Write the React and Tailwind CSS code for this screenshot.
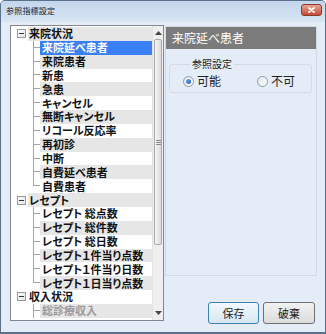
import React from "react";

const tree = [
    {
        label: "来院状況",
        children: ["来院延べ患者", "来院患者", "新患", "急患", "キャンセル", "無断キャンセル", "リコール反応率", "再初診", "中断", "自費延べ患者", "自費患者"],
    },
    {
        label: "レセプト",
        children: ["レセプト 総点数", "レセプト 総件数", "レセプト 総日数", "レセプト１件当り点数", "レセプト１件当り日数", "レセプト１日当り点数"],
    },
    {
        label: "収入状況",
        children: ["総診療収入"],
        dim: true,
        open: true,
    },
];

// flatten so the stripes follow the global row index
const rows = [];
tree.forEach((group) => {
    rows.push({ type: "root", label: group.label });
    group.children.forEach((c, i) => {
        rows.push({ type: "leaf", label: c, last: !group.open && i === group.children.length - 1, dim: group.dim });
    });
});

const SELECTED = 1;

const MinusBox = () => (
    <div className="w-[9px] h-[9px] shrink-0 border border-[#9a9a9a] bg-gradient-to-br from-white to-[#e4e4e4] flex items-center justify-center">
        <div className="w-[5px] h-px bg-[#333]" />
    </div>
);

const Row = ({ row, index }) => {
    const selected = index === SELECTED;
    const bg = selected ? "bg-[#3a7ff3] text-white" : index % 2 === 0 ? "bg-[#e6e6e6]" : "bg-white";
    const color = selected ? "" : row.dim ? "text-[#9a9a9a]" : "text-[#111]";

    if (row.type === "root") {
        return (
            <div className="flex items-center h-[13.85px]">
                <div className="w-[6px] shrink-0" />
                <MinusBox />
                <div className="w-[2px] shrink-0" />
                <div className={`flex-1 h-full flex items-center pl-[1px] whitespace-nowrap text-[#111] ${bg}`}>{row.label}</div>
            </div>
        );
    }

    return (
        <div className="flex h-[13.85px]">
            <div className="w-[22px] shrink-0" />
            <div className="w-[7px] shrink-0 flex flex-col">
                <div className="h-1/2 border-l border-b border-[#a5a5a5]" />
                <div className={`h-1/2 ${row.last ? "" : "border-l border-[#a5a5a5]"}`} />
            </div>
            <div className={`flex-1 h-full flex items-center pl-[2px] whitespace-nowrap ${bg} ${color}`}>{row.label}</div>
        </div>
    );
};

const Arrow = ({ down }) => (
    <svg width="7" height="4" viewBox="0 0 7 4">
        <path d={down ? "M0 0 L7 0 L3.5 4 Z" : "M0 4 L7 4 L3.5 0 Z"} fill="#444" />
    </svg>
);

const Scrollbar = () => (
    <div className="w-[11px] shrink-0 bg-[#efefef] border-l border-[#e2e2e2] flex flex-col">
        <div className="h-[13px] flex items-center justify-center">
            <Arrow />
        </div>
        <div className="h-[206px] mx-[1px] rounded-[2px] border border-[#a9a9a9] bg-gradient-to-r from-[#f6f6f6] to-[#dcdcdc] flex flex-col items-center justify-center gap-px">
            <div className="w-[5px] h-px bg-[#8a8a8a]" />
            <div className="w-[5px] h-px bg-[#8a8a8a]" />
            <div className="w-[5px] h-px bg-[#8a8a8a]" />
        </div>
        <div className="flex-1" />
        <div className="h-[14px] flex items-center justify-center">
            <Arrow down />
        </div>
    </div>
);

const Radio = ({ checked, label }) => (
    <div className="flex items-center gap-[3px]">
        <div className="w-[11px] h-[11px] rounded-full border border-[#8e9aa8] bg-gradient-to-br from-[#e2e6ea] to-white flex items-center justify-center">
            {checked && <div className="w-[5px] h-[5px] rounded-full bg-gradient-to-br from-[#6fb2ee] to-[#1c5fb4]" />}
        </div>
        <span className="text-[12px] leading-none text-[#222]">{label}</span>
    </div>
);

const App = () => {
    return (
        <div className="w-[326px] h-[334px] flex flex-col bg-[#e4edf7] border border-b-2 border-[#5a7189] rounded-t-[5px] overflow-hidden font-['Noto_Sans_CJK_JP',sans-serif]">
            {/* Title bar */}
            <div className="h-[21px] shrink-0 flex items-start justify-between pl-[5px] pr-[3px] bg-gradient-to-b from-[#c3d6ec] to-[#d8e5f3]">
                <span className="text-[8px] tracking-[0.2px] leading-none mt-[6px] text-[#1a1a1a]">参照指標設定</span>
                <div className="mt-[3px] w-[21px] h-[12px] rounded-[3px] border border-[#8a3a2a] bg-gradient-to-b from-[#e7a593] to-[#c24a32] flex items-center justify-center">
                    <svg width="7" height="6" viewBox="0 0 7 6">
                        <path d="M1 1 L6 5 M6 1 L1 5" stroke="white" strokeWidth="1.8" strokeLinecap="round" />
                    </svg>
                </div>
            </div>

            {/* Body */}
            <div className="flex-1 flex items-start pl-[9px] gap-px">
                {/* Tree */}
                <div className="mt-[3px] w-[154px] h-[296px] border border-[#828790] bg-white flex overflow-hidden">
                    <div className="flex-1 pt-px overflow-hidden text-[11px] font-bold leading-none [font-feature-settings:'palt']">
                        {rows.map((row, i) => (
                            <Row key={i} row={row} index={i} />
                        ))}
                    </div>
                    <Scrollbar />
                </div>

                {/* Detail */}
                <div className="w-[152px] flex flex-col">
                    <div className="mt-[4px] h-[250px] border border-[#d0dae5] flex flex-col">
                        <div className="h-[22px] bg-[#7b7b7b] flex items-center pl-[6px] text-[12px] text-white">来院延べ患者</div>
                        <fieldset className="mt-[8px] ml-[3px] mr-[4px] border border-[#d3dbe4] rounded-[3px] pl-[13px] pt-[3px] pb-[4px]">
                            <legend className="ml-[7px] px-[2px] text-[10px] leading-[14px] text-[#222]">参照設定</legend>
                            <div className="flex items-center h-[14px]">
                                <div className="w-[74px]">
                                    <Radio checked label="可能" />
                                </div>
                                <Radio label="不可" />
                            </div>
                        </fieldset>
                    </div>
                    <div className="mt-[26px] flex justify-end gap-[4px] pr-[2px]">
                        <button className="w-[51px] h-[22px] rounded-[3px] border border-[#3c7fb1] bg-gradient-to-b from-[#f4f9fd] to-[#d6e6f2] text-[11px] text-[#222]">保存</button>
                        <button className="w-[52px] h-[22px] rounded-[3px] border border-[#707070] bg-gradient-to-b from-[#f2f2f2] to-[#dcdcdc] text-[11px] text-[#222]">破棄</button>
                    </div>
                </div>
            </div>
        </div>
    );
};

export default App;
